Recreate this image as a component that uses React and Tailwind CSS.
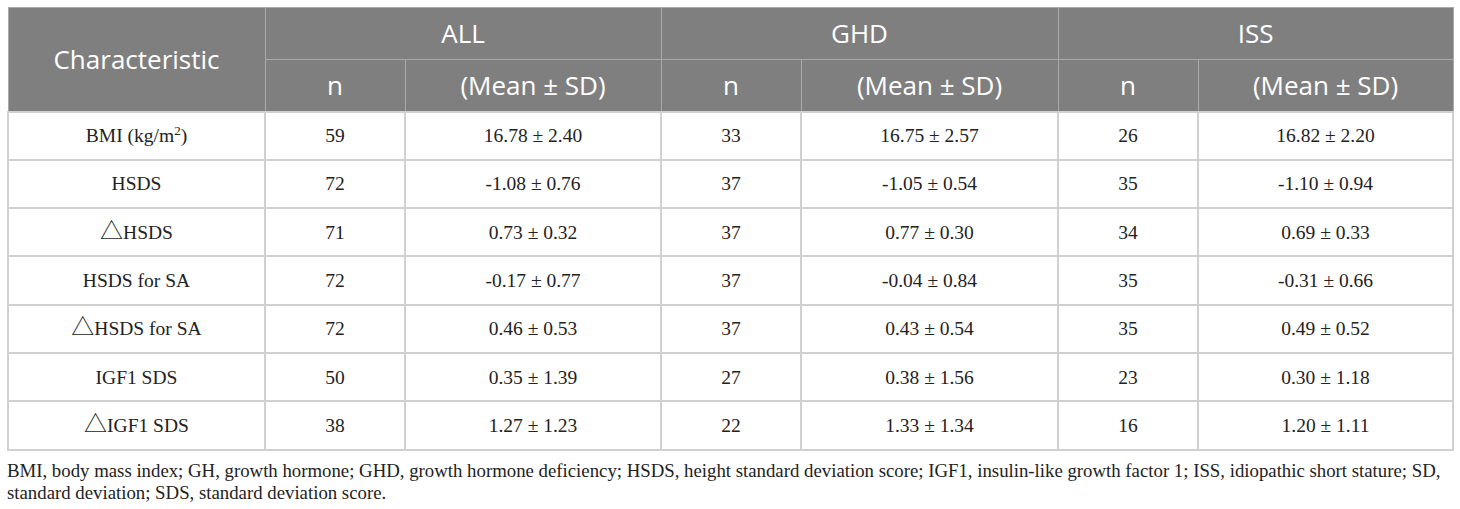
import React from "react";

const Tri = () => (
  <span className="font-['Noto_Sans_CJK_SC',sans-serif] text-[23px] leading-none">△</span>
);

const rows = [
  [<>BMI (kg/m<span className="relative -top-[7px] text-[13px] leading-none">2</span>)</>, "59", "16.78 ± 2.40", "33", "16.75 ± 2.57", "26", "16.82 ± 2.20"],
  ["HSDS", "72", "-1.08 ± 0.76", "37", "-1.05 ± 0.54", "35", "-1.10 ± 0.94"],
  [<><Tri />HSDS</>, "71", "0.73 ± 0.32", "37", "0.77 ± 0.30", "34", "0.69 ± 0.33"],
  ["HSDS for SA", "72", "-0.17 ± 0.77", "37", "-0.04 ± 0.84", "35", "-0.31 ± 0.66"],
  [<><Tri />HSDS for SA</>, "72", "0.46 ± 0.53", "37", "0.43 ± 0.54", "35", "0.49 ± 0.52"],
  ["IGF1 SDS", "50", "0.35 ± 1.39", "27", "0.38 ± 1.56", "23", "0.30 ± 1.18"],
  [<><Tri />IGF1 SDS</>, "38", "1.27 ± 1.23", "22", "1.33 ± 1.34", "16", "1.20 ± 1.11"],
];

const widths = [257, 140, 256, 140, 257, 140, 255];

export default function App() {
  const hd = "border border-[#a9a9a9] font-normal text-white text-center";
  const mean = <>(Mean ± SD)</>;
  return (
    <div className="w-[1460px] h-[509px] bg-white pt-[7px] pl-[7px]">
      <table className="border-collapse table-fixed w-[1445px]">
        <colgroup>
          {widths.map((w, i) => (
            <col key={i} style={{ width: w }} />
          ))}
        </colgroup>
        <thead className="bg-[#7f7f7f] text-[26px] font-['Open_Sans',sans-serif]">
          <tr className="h-[52px]">
            <th rowSpan={2} className={hd}>Characteristic</th>
            <th colSpan={2} className={hd}>ALL</th>
            <th colSpan={2} className={hd}>GHD</th>
            <th colSpan={2} className={hd}>ISS</th>
          </tr>
          <tr className="h-[52px]">
            <th className={hd}>n</th>
            <th className={hd}>{mean}</th>
            <th className={hd}>n</th>
            <th className={hd}>{mean}</th>
            <th className={hd}>n</th>
            <th className={hd}>{mean}</th>
          </tr>
        </thead>
        <tbody className="font-['Liberation_Serif',serif] text-[19.5px] text-[#222]">
          {rows.map((r, i) => (
            <tr key={i} className="h-[48.3px]">
              {r.map((c, j) => (
                <td key={j} className="border-2 border-[#d0d0d0] text-center align-middle p-0">
                  {c}
                </td>
              ))}
            </tr>
          ))}
        </tbody>
      </table>
      <p className="mt-[9px] font-['Liberation_Serif',serif] text-[18.8px] leading-[22px] text-[#222] w-[1445px]">
        BMI, body mass index; GH, growth hormone; GHD, growth hormone deficiency; HSDS, height standard deviation score; IGF1, insulin-like growth factor 1; ISS, idiopathic short stature; SD, standard deviation; SDS, standard deviation score.
      </p>
    </div>
  );
}
